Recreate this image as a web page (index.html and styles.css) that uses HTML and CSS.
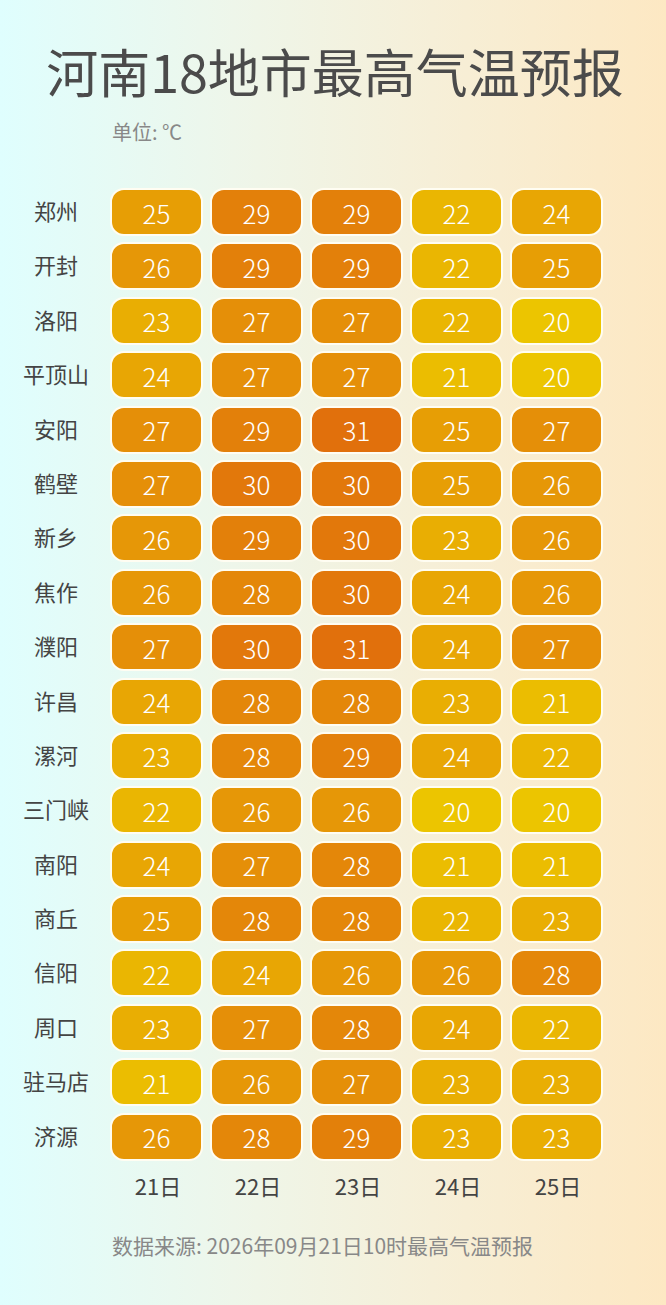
FILE: index.html
```html
<!DOCTYPE html>
<html lang="zh-CN">
<head>
<meta charset="utf-8">
<title>河南18地市最高气温预报</title>
<link rel="stylesheet" href="styles.css">
</head>
<body>
<div class="page">
  <h1 class="title">河南18地市最高气温预报</h1>
  <div class="unit">单位: ℃</div>
  <div class="grid">
    <div class="label">郑州</div><div class="cell t25">25</div><div class="cell t29">29</div><div class="cell t29">29</div><div class="cell t22">22</div><div class="cell t24">24</div>
    <div class="label">开封</div><div class="cell t26">26</div><div class="cell t29">29</div><div class="cell t29">29</div><div class="cell t22">22</div><div class="cell t25">25</div>
    <div class="label">洛阳</div><div class="cell t23">23</div><div class="cell t27">27</div><div class="cell t27">27</div><div class="cell t22">22</div><div class="cell t20">20</div>
    <div class="label">平顶山</div><div class="cell t24">24</div><div class="cell t27">27</div><div class="cell t27">27</div><div class="cell t21">21</div><div class="cell t20">20</div>
    <div class="label">安阳</div><div class="cell t27">27</div><div class="cell t29">29</div><div class="cell t31">31</div><div class="cell t25">25</div><div class="cell t27">27</div>
    <div class="label">鹤壁</div><div class="cell t27">27</div><div class="cell t30">30</div><div class="cell t30">30</div><div class="cell t25">25</div><div class="cell t26">26</div>
    <div class="label">新乡</div><div class="cell t26">26</div><div class="cell t29">29</div><div class="cell t30">30</div><div class="cell t23">23</div><div class="cell t26">26</div>
    <div class="label">焦作</div><div class="cell t26">26</div><div class="cell t28">28</div><div class="cell t30">30</div><div class="cell t24">24</div><div class="cell t26">26</div>
    <div class="label">濮阳</div><div class="cell t27">27</div><div class="cell t30">30</div><div class="cell t31">31</div><div class="cell t24">24</div><div class="cell t27">27</div>
    <div class="label">许昌</div><div class="cell t24">24</div><div class="cell t28">28</div><div class="cell t28">28</div><div class="cell t23">23</div><div class="cell t21">21</div>
    <div class="label">漯河</div><div class="cell t23">23</div><div class="cell t28">28</div><div class="cell t29">29</div><div class="cell t24">24</div><div class="cell t22">22</div>
    <div class="label">三门峡</div><div class="cell t22">22</div><div class="cell t26">26</div><div class="cell t26">26</div><div class="cell t20">20</div><div class="cell t20">20</div>
    <div class="label">南阳</div><div class="cell t24">24</div><div class="cell t27">27</div><div class="cell t28">28</div><div class="cell t21">21</div><div class="cell t21">21</div>
    <div class="label">商丘</div><div class="cell t25">25</div><div class="cell t28">28</div><div class="cell t28">28</div><div class="cell t22">22</div><div class="cell t23">23</div>
    <div class="label">信阳</div><div class="cell t22">22</div><div class="cell t24">24</div><div class="cell t26">26</div><div class="cell t26">26</div><div class="cell t28">28</div>
    <div class="label">周口</div><div class="cell t23">23</div><div class="cell t27">27</div><div class="cell t28">28</div><div class="cell t24">24</div><div class="cell t22">22</div>
    <div class="label">驻马店</div><div class="cell t21">21</div><div class="cell t26">26</div><div class="cell t27">27</div><div class="cell t23">23</div><div class="cell t23">23</div>
    <div class="label">济源</div><div class="cell t26">26</div><div class="cell t28">28</div><div class="cell t29">29</div><div class="cell t23">23</div><div class="cell t23">23</div>
    <div class="label"></div><div class="day">21日</div><div class="day">22日</div><div class="day">23日</div><div class="day">24日</div><div class="day">25日</div>
  </div>
  <div class="source">数据来源: 2026年09月21日10时最高气温预报</div>
</div>
</body>
</html>
```

FILE: styles.css
```css
html, body {
  margin: 0;
  padding: 0;
}
body {
  width: 666px;
  height: 1305px;
  overflow: hidden;
  background: linear-gradient(to right, #dffefe 0%, #eef6ea 35%, #f6efd8 65%, #fde8c3 100%);
  font-family: "Noto Sans CJK SC", "Noto Sans", sans-serif;
}
.page {
  padding-top: 45px;
}
.title {
  margin: 0;
  font-size: 52px;
  line-height: 52px;
  font-weight: 400;
  color: #4b4b4b;
  text-align: center;
  padding-left: 4px;
}
.unit {
  margin-top: 25px;
  padding-left: 112px;
  font-size: 20px;
  line-height: 20px;
  color: #888;
}
.grid {
  margin-top: 46px;
  display: grid;
  grid-template-columns: 103px repeat(5, 93px);
  grid-auto-rows: 48px;
  column-gap: 7px;
  row-gap: 6.4px;
}
.label {
  display: flex;
  align-items: center;
  justify-content: center;
  font-size: 22px;
  color: #444;
  padding: 0 0 4px 9px;
  box-sizing: border-box;
}
.cell {
  box-sizing: border-box;
  border: 2.5px solid #fffdf2;
  border-radius: 14px;
  display: flex;
  align-items: center;
  justify-content: center;
  color: #fff;
  font-size: 26px;
  font-weight: 300;
}
.day {
  display: flex;
  align-items: center;
  justify-content: center;
  font-size: 22px;
  color: #444;
  height: 36px;
  padding-left: 3px;
}
.source {
  margin-top: 20px;
  padding-left: 112px;
  font-size: 21px;
  line-height: 21px;
  color: #888;
}
.t20 { background: #ecc500; }
.t21 { background: #ebbd01; }
.t22 { background: #eab602; }
.t23 { background: #e9ae03; }
.t24 { background: #e8a604; }
.t25 { background: #e79e05; }
.t26 { background: #e69707; }
.t27 { background: #e58f08; }
.t28 { background: #e48709; }
.t29 { background: #e3800a; }
.t30 { background: #e2780b; }
.t31 { background: #e1700c; }
```
